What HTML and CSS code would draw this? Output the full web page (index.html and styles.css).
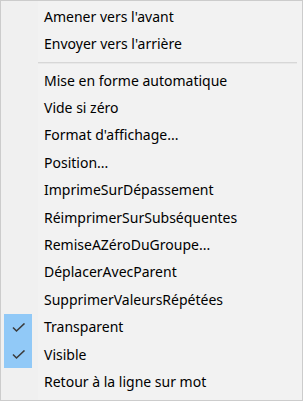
FILE: index.html
```html
<!DOCTYPE html>
<html lang="fr">
<head>
<meta charset="utf-8">
<link rel="stylesheet" href="styles.css">
</head>
<body>
<div class="menu">
  <div class="item"><span class="gut"></span><span class="label">Amener vers l'avant</span></div>
  <div class="item"><span class="gut"></span><span class="label">Envoyer vers l'arrière</span></div>
  <div class="sep"></div>
  <div class="item"><span class="gut"></span><span class="label">Mise en forme automatique</span></div>
  <div class="item"><span class="gut"></span><span class="label">Vide si zéro</span></div>
  <div class="item"><span class="gut"></span><span class="label">Format d'affichage...</span></div>
  <div class="item"><span class="gut"></span><span class="label">Position...</span></div>
  <div class="item"><span class="gut"></span><span class="label">ImprimeSurDépassement</span></div>
  <div class="item"><span class="gut"></span><span class="label">RéimprimerSurSubséquentes</span></div>
  <div class="item"><span class="gut"></span><span class="label">RemiseAZéroDuGroupe...</span></div>
  <div class="item"><span class="gut"></span><span class="label">DéplacerAvecParent</span></div>
  <div class="item"><span class="gut"></span><span class="label">SupprimerValeursRépétées</span></div>
  <div class="item"><span class="gut checked first"><svg class="check" width="14" height="10" viewBox="0 0 14 10"><path d="M1 4.5 L4.5 8 L12.5 0.5" fill="none" stroke="#3b3b3b" stroke-width="1.6"/></svg></span><span class="label">Transparent</span></div>
  <div class="item"><span class="gut checked last"><svg class="check" width="14" height="10" viewBox="0 0 14 10"><path d="M1 4.5 L4.5 8 L12.5 0.5" fill="none" stroke="#3b3b3b" stroke-width="1.6"/></svg></span><span class="label">Visible</span></div>
  <div class="item"><span class="gut"></span><span class="label">Retour à la ligne sur mot</span></div>
</div>
</body>
</html>
```
FILE: styles.css
```css
html, body {
  margin: 0;
  padding: 0;
  background: #ffffff;
}
.menu {
  box-sizing: border-box;
  width: 303px;
  height: 401px;
  border: 1px solid #cccccc;
  background: linear-gradient(to right, #f0f0f0 37px, #f2f2f2 37px);
  padding: 2.3px 0 5px 0;
  font-family: "Noto Sans", "Open Sans", sans-serif;
  font-size: 14px;
  color: #000000;
}
.item {
  display: flex;
  align-items: center;
  height: 27.4px;
  white-space: nowrap;
}
.gut {
  align-self: stretch;
  width: 28px;
  margin-left: 3px;
  margin-right: 12px;
  display: flex;
  align-items: center;
  justify-content: center;
}
.gut.checked {
  background: #91c9f7;
}
.gut.first {
  margin-top: 1px;
}
.gut.last {
  margin-bottom: 0;
}
.check {
  display: block;
  margin-left: 2px;
}
.label {
  line-height: 20px;
}
.sep {
  height: 1px;
  margin: 3.5px 5px 3.4px 37px;
  background: #d7d7d7;
  border-bottom: 1px solid #e8e8e8;
}
```
